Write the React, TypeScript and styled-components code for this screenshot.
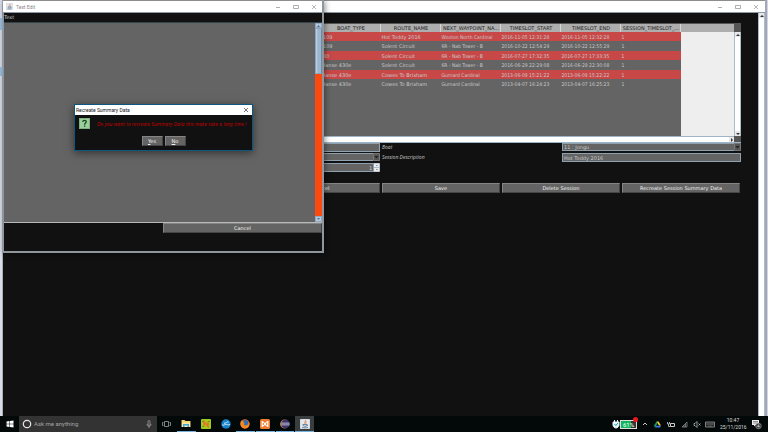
import React from "react";
import styled, { createGlobalStyle, css } from "styled-components";

const ui = `Roboto, "Noto Sans", sans-serif`;
const swing = `"DejaVu Sans", "Noto Sans", sans-serif`;
const slanted = `"Open Sans", "Noto Sans", sans-serif`;

const Global = createGlobalStyle`
  *, *::before, *::after { box-sizing: border-box; }
  html, body { margin: 0; background: #111; }
  body { font: 5px/8px ${swing}; color: #c8c8c8; }
  button, input, select { font: inherit; color: inherit; margin: 0; border-radius: 0; }
  button { padding: 0; border: 0; background: none; }
`;

const Desktop = styled.div`
  position: relative;
  min-height: 100vh;
  display: flex;
  flex-direction: column;
  overflow: hidden;
  padding: 0 1px 0 3px;
  background: linear-gradient(90deg, #d9dde9 2px, #a9adb8 2px 3px, #d3d5e4 3px);
`;

const DeskMark = styled.i<{ $top: number; $height: number }>`
  position: absolute;
  left: 0;
  width: 3px;
  top: ${(p) => p.$top}px;
  height: ${(p) => p.$height}px;
  background: #9dbfdd;
`;

const MainWindow = styled.section`
  flex: 1;
  display: flex;
  flex-direction: column;
  border-right: 2px solid #a3a7b6;
  background: #111;
`;

const TitleBar = styled.header`
  height: 13px;
  display: flex;
  align-items: center;
  gap: 3px;
  padding: 0 6px 0 3px;
  border-top: 1px solid #8d8d8d;
  border-bottom: 1px solid #8c99a6;
  background: #fff;
  color: #888;
  font-family: ${ui};
`;

const Grow = styled.span`
  flex: 1;
`;

const Controls = styled.div`
  display: flex;
  gap: 12px;
  button { width: 6px; height: 8px; display: flex; align-items: center; justify-content: center; }
`;

const WindowControls = () => (
  <Controls>
    <button aria-label="Minimize">
      <svg width="6" height="6" viewBox="0 0 6 6"><path d="M1 3.500h4" stroke="#999" strokeWidth=".8" /></svg>
    </button>
    <button aria-label="Maximize">
      <svg width="6" height="6" viewBox="0 0 6 6"><path d="M.5 1.500h5v3h-5z" fill="none" stroke="#999" strokeWidth=".8" /></svg>
    </button>
    <button aria-label="Close">
      <svg width="6" height="6" viewBox="0 0 6 6"><path d="M1 1l4 4M5 1L1 5" stroke="#999" strokeWidth=".7" /></svg>
    </button>
  </Controls>
);

const MainBody = styled.div`
  flex: 1;
  display: flex;
`;

const MainContent = styled.main`
  flex: 1;
  min-width: 0;
  padding: 10px 17px 0 18px;
`;

const Track = styled.div`
  width: 7px;
  display: flex;
  flex-direction: column;
  justify-content: space-between;
  border: solid #a9bccb;
  border-width: 0 1px 0 1px;
  background: #fff;
`;

const ArrowButton = styled.button`
  width: 5px;
  height: 5px;
  display: flex;
  align-items: center;
  justify-content: center;
  background: #e8e8e8;
`;

const Arrow = ({ turn, label }: { turn: number; label: string }) => (
  <ArrowButton aria-label={label}>
    <svg width="4" height="4" viewBox="0 0 4 4"><path d="M2 1L4 3H0z" fill="#333" transform={`rotate(${turn} 2 2)`} /></svg>
  </ArrowButton>
);

const TableFrame = styled.div`
  display: grid;
  grid-template-columns: minmax(0, 1fr) 7px;
  grid-template-rows: 112px 7px;
  border-top: 1px solid #555;
`;

const Viewport = styled.div`
  background: linear-gradient(#aeaeae 0 8px, #eee 8px);
  display: grid;
  grid-template-columns: minmax(0, 1fr) 53px;
`;

const TableArea = styled.div`
  background: #646464;
`;

const Sessions = styled.table`
  width: 100%;
  table-layout: fixed;
  border-collapse: collapse;
  white-space: nowrap;
  th, td { width: 60px; padding: 0 0 0 1px; line-height: 8px; }
  th:first-child, td:first-child { width: auto; }
  th {
    height: 8px;
    font-weight: 400;
    color: #222;
    background: #aeaeae;
    border-right: 1px solid #d5d5d5;
  }
  tbody tr { color: #c8c8c8; }
  tbody tr:nth-child(odd) { height: 9px; background: #c84848; }
  tbody tr:nth-child(even) { height: 10px; }
`;

const Cell = styled.td<{ $condensed: boolean }>`
  font-family: ${(p) => (p.$condensed ? `"DejaVu Sans Condensed", ` : "")}${swing};
`;

const SideBar = styled.div`
  display: grid;
  grid-template-rows: 8px 1fr;
  background: #555;
`;

const HorizontalTrack = styled.div`
  display: flex;
  justify-content: flex-end;
  border: solid #9fb3c6;
  border-width: 1px 0;
  background: #fff;
`;

const Corner = styled.div`
  background: #555;
  border-bottom: 1px solid #9fb3c6;
`;

const Form = styled.form`
  display: grid;
  grid-template-columns: repeat(4, minmax(0, 1fr));
  grid-auto-rows: 9px;
  row-gap: 1px;
  label { padding-left: 1px; line-height: 8px; font-family: ${slanted}; font-style: italic; }
`;

const field = css`
  width: 100%;
  min-width: 0;
  height: 9px;
  padding: 0 1px;
  border: 1px solid #8fa0ae;
  background: #646464;
  color: #c8c8c8;
  line-height: 7px;
  outline: 0;
`;

const Input = styled.input<{ $end?: boolean }>`
  ${field}
  text-align: ${(p) => (p.$end ? "right" : "left")};
`;

const Inset = styled.div<{ $last?: boolean }>`
  display: flex;
  margin: ${(p) => (p.$last ? "0 0 0 1px" : "0 1px 0 0")};
`;

const SelectBox = styled.div`
  position: relative;
  flex: 1;
  select { ${field} appearance: none; display: block; height: 8px; padding: 0 1px; line-height: 6px; }
  svg { position: absolute; right: 0; top: 0; pointer-events: none; }
`;

const Drop = () => (
  <svg width="7" height="8" viewBox="0 0 7 8"><path d="M0 0h7v8H0z" fill="#555" /><path d="M.5 .5h6v7h-6z" fill="none" stroke="#777" /><path d="M1.500 3h4l-2 2.500z" fill="#222" /></svg>
);

const Actions = styled.div`
  display: grid;
  grid-template-columns: repeat(6, minmax(0, 1fr));
  margin-top: 11px;
  button { margin: 0 1px; }
  button:first-child { grid-column: 3; }
`;

const SwingButton = styled.button`
  height: 10px;
  border: 1px solid;
  border-color: #858585 #454545 #454545 #858585;
  background: #646464;
  color: #f0f0f0;
  line-height: 8px;
`;

const EditWindow = styled.section`
  position: absolute;
  left: 3px;
  top: 0;
  width: 321px;
  display: flex;
  flex-direction: column;
  border: 1px solid #8f979c;
  border-width: 0 2px 2px 1px;
  background: #111;
  box-shadow: 1px 1px 6px rgba(0, 0, 0, 0.45);
  ${TitleBar} { margin-left: -1px; padding-right: 5px; }
`;

const MenuBar = styled.nav`
  height: 10px;
  border-bottom: 1px solid #34434c;
  button { display: block; line-height: 9px; }
`;

const EditArea = styled.div`
  height: 200px;
  display: flex;
  border-bottom: 1px solid #b5b9bb;
  background: #646464;
`;

const OrangeTrack = styled.div`
  width: 7px;
  display: grid;
  grid-template-rows: 5px 46px 1fr 6px;
  background: #fa4a10;
  button { width: 7px; height: 100%; display: grid; place-items: center; background: #b4c8dc; border: 1px solid #8fa7c0; }
`;

const Thumb = styled.div`
  border: 1px solid #8ba4c0;
  border-right-color: #7089a8;
  background: linear-gradient(90deg, #c4d4e4, #9db5cf 40%);
`;

const EditFooter = styled.footer`
  display: grid;
  grid-template-columns: 1fr 1fr;
  padding-bottom: 18px;
  button { grid-column: 2; }
`;

const Dialog = styled.section`
  position: absolute;
  left: 74px;
  top: 104px;
  width: 179px;
  border: 1px solid #0d5680;
  background: #111;
  box-shadow: 0 2px 8px rgba(0, 0, 0, 0.5);
`;

const DialogTitle = styled.header`
  height: 10px;
  display: flex;
  align-items: center;
  justify-content: space-between;
  padding: 0 3px 0 1px;
  background: #fff;
  color: #222;
  font-family: ${ui};
  button { display: flex; }
`;

const Message = styled.div`
  display: flex;
  align-items: center;
  gap: 7px;
  padding: 3px 0 0 4px;
  color: #c80000;
  font-family: ${slanted};
  font-style: italic;
  white-space: nowrap;
  svg { flex: none; }
`;

const Answers = styled.div`
  display: flex;
  justify-content: center;
  gap: 2px;
  padding: 7px 0 4px;
  button { width: 21px; }
`;

const Taskbar = styled.footer`
  position: relative;
  height: 16px;
  margin: 0 -1px 0 -3px;
  display: flex;
  align-items: stretch;
  background: #030809;
  font-family: ${ui};
`;

const Start = styled.button`
  width: 19px;
  display: grid;
  place-items: center;
`;

const Search = styled.label`
  width: 138px;
  display: flex;
  align-items: center;
  gap: 2px;
  padding: 0 5px 0 3px;
  background: #333;
  input { flex: 1; min-width: 0; border: 0; padding: 0; background: none; outline: 0; font-size: 6px; line-height: 10px; }
  input::placeholder { color: #a5a5a5; opacity: 1; }
`;

const Apps = styled.div`
  width: 157px;
  display: flex;
  gap: 1px;
`;

const TaskButton = styled.button<{ $open?: boolean; $active?: boolean }>`
  flex: 1;
  display: grid;
  place-items: center;
  border-bottom: 1px solid ${(p) => (p.$open ? "#76b2dc" : "transparent")};
  background: ${(p) => (p.$active ? "#3a3d3e" : "none")};
`;

const Tray = styled.div`
  display: flex;
  align-items: center;
  padding-right: 1px;
  svg { display: block; }
`;

const TrayIcons = styled.div`
  width: 79px;
  display: grid;
  grid-template-columns: repeat(6, 1fr);
  align-items: center;
  justify-items: center;
  margin: 0 3px 0 1px;
`;

const Clock = styled.time`
  width: 26px;
  margin-right: 5px;
  text-align: center;
  color: #ddd;
  line-height: 7px;
  white-space: nowrap;
`;

const BatteryBox = styled.span`
  position: relative;
  width: 17px;
  height: 9px;
  border: 1px solid #ddd;
  background: linear-gradient(90deg, #10b45c 65%, #333 65%);
  color: #fff;
  font-size: 6px;
  line-height: 7px;
  text-align: center;
  &::after { content: ""; position: absolute; right: -2px; top: -4px; width: 5px; height: 5px; border-radius: 50%; background: #f0141e; }
`;

const JavaIcon = ({ size }: { size: number }) => (
  <svg width={size} height={size} viewBox="0 0 10 10">
    <rect width="10" height="10" rx="1" fill="#e4e8ec" stroke="#b4bcc4" strokeWidth=".5" />
    <path d="M5.300 1.200c1 1.300-1.500 1.900-.4 3.500M6.600 2.800c-1.200.7-1.200 1.200-.8 2" fill="none" stroke="#dc6a30" strokeWidth=".8" />
    <path d="M2.800 5.500h4v1.200c0 .8-3.200.8-3.600 0zM6.800 5.700c1.200-.2 1 .9-.1 1.100M2 8.300c1.500.7 4.500.7 6 0" fill="none" stroke="#4a7192" strokeWidth=".8" />
  </svg>
);

const sessions = [
  ["J109", "Hot Toddy 2016", "Wooton North Cardinal", "2016-11-05 12:31:28", "2016-11-05 12:32:28", "1"],
  ["J109", "Solent Circuit", "6R - Nab Tower - B", "2016-10-22 12:54:29", "2016-10-22 12:55:29", "1"],
  ["J80", "Solent Circuit", "6R - Nab Tower - B", "2016-07-27 17:32:35", "2016-07-27 17:33:35", "1"],
  ["Hanse 430e", "Solent Circuit", "6R - Nab Tower - B", "2016-06-29 22:29:08", "2016-06-29 22:30:08", "1"],
  ["Hanse 430e", "Cowes To Brixham", "Gurnard Cardinal", "2013-06-09 15:21:22", "2013-06-09 15:22:22", "1"],
  ["Hanse 430e", "Cowes To Brixham", "Gurnard Cardinal", "2013-04-07 16:24:23", "2013-04-07 16:25:23", "1"],
];
const columns = ["BOAT_TYPE", "ROUTE_NAME", "NEXT_WAYPOINT_NA...", "TIMESLOT_START", "TIMESLOT_END", "SESSION_TIMESLOT_..."];

export default function App() {
  return (
    <>
      <Global />
      <Desktop>
        <DeskMark $top={18} $height={12} />
        <DeskMark $top={67} $height={9} />
        <MainWindow>
          <TitleBar><Grow /><WindowControls /></TitleBar>
          <MainBody>
            <MainContent>
              <TableFrame>
                <Viewport>
                  <TableArea>
                    <Sessions>
                      <thead><tr><th />{columns.map((c) => <th key={c}>{c}</th>)}</tr></thead>
                      <tbody>
                        {sessions.map((s) => (
                          <tr key={s[3]}>
                            <td />
                            {s.map((v, i) => <Cell key={i} $condensed={i > 1}>{v}</Cell>)}
                          </tr>
                        ))}
                      </tbody>
                    </Sessions>
                  </TableArea>
                </Viewport>
                <SideBar>
                  <span />
                  <Track><Arrow turn={0} label="Scroll up" /><Arrow turn={180} label="Scroll down" /></Track>
                </SideBar>
                <HorizontalTrack><Arrow turn={90} label="Scroll right" /></HorizontalTrack>
                <Corner />
              </TableFrame>
              <Form>
                <span />
                <Inset><Input aria-label="Session" /></Inset>
                <label htmlFor="boat">Boat</label>
                <Inset $last>
                  <SelectBox><select id="boat"><option>11 : Jongu</option></select><Drop /></SelectBox>
                </Inset>
                <span />
                <Inset><SelectBox><select aria-label="Route"><option></option></select><Drop /></SelectBox></Inset>
                <label htmlFor="description">Session Description</label>
                <Inset $last><Input id="description" defaultValue="Hot Toddy 2016" /></Inset>
                <span />
                <Inset>
                  <Input $end aria-label="Count" defaultValue="1" />
                  <svg width="6" height="9" viewBox="0 0 6 9"><path d="M0 0h6v9H0z" fill="#e8edf2" /><path d="M0 4.500h6" stroke="#a9bccb" /><path d="M2 3h2L3 2zM2 6h2L3 7z" fill="#555" /></svg>
                </Inset>
              </Form>
              <Actions>
                <SwingButton>Cancel</SwingButton>
                <SwingButton>Save</SwingButton>
                <SwingButton>Delete Session</SwingButton>
                <SwingButton>Recreate Session Summary Data</SwingButton>
              </Actions>
            </MainContent>
            <Track><Arrow turn={0} label="Scroll page up" /></Track>
          </MainBody>
        </MainWindow>

        <EditWindow>
          <TitleBar><JavaIcon size={7} />Text Edit<Grow /><WindowControls /></TitleBar>
          <MenuBar><button>Text</button></MenuBar>
          <EditArea>
            <Grow />
            <OrangeTrack>
              <button aria-label="Scroll text up"><svg width="3" height="2" viewBox="0 0 3 2"><path d="M0 2h3L1.500 0z" fill="#5d7186" /></svg></button>
              <Thumb />
              <span />
              <button aria-label="Scroll text down"><svg width="3" height="2" viewBox="0 0 3 2"><path d="M0 0h3L1.500 2z" fill="#5d7186" /></svg></button>
            </OrangeTrack>
          </EditArea>
          <EditFooter><SwingButton>Cancel</SwingButton></EditFooter>
        </EditWindow>

        <Dialog role="dialog" aria-label="Recreate Summary Data">
          <DialogTitle>
            Recreate Summary Data
            <button aria-label="Close dialog"><svg width="6" height="6" viewBox="0 0 6 6"><path d="M1 1l4 4M5 1L1 5" stroke="#333" strokeWidth=".7" /></svg></button>
          </DialogTitle>
          <Message>
            <svg width="11" height="11" viewBox="0 0 11 11">
              <rect x=".5" y=".5" width="10" height="10" fill="#9ccf9c" stroke="#7fb07f" />
              <path d="M3.800 4c0-2.300 3.600-2.200 3.500-.2C7.200 5 5.600 5 5.600 6.700M5.600 7.600v1.200" fill="none" stroke="#17451c" strokeWidth="1.300" />
            </svg>
            Do you want to recreate Summary Data this make take a long time !
          </Message>
          <Answers>
            <SwingButton><u>Y</u>es</SwingButton>
            <SwingButton><u>N</u>o</SwingButton>
          </Answers>
        </Dialog>

        <Taskbar>
          <Start aria-label="Start">
            <svg width="8" height="8" viewBox="0 0 8 8"><path d="M.5 1.400L3.500 1v2.700h-3zM4 .9L7.500.4v3.300H4zM.5 4.200h3V7l-3-.4zM4 4.200h3.500v3.300L4 7z" fill="#fff" /></svg>
          </Start>
          <Search>
            <svg width="10" height="10" viewBox="0 0 10 10"><circle cx="5" cy="5" r="3.700" fill="none" stroke="#e8e8e8" strokeWidth="1.200" /></svg>
            <input aria-label="Search" placeholder="Ask me anything" />
            <svg width="6" height="9" viewBox="0 0 6 9"><path d="M2 1.500a1 1 0 0 1 2 0v3a1 1 0 0 1-2 0zM1 4c0 3 4 3 4 0M3 6.200V8" fill="none" stroke="#aaa" strokeWidth=".7" /></svg>
          </Search>
          <Apps>
            <TaskButton aria-label="Task view">
              <svg width="9" height="8" viewBox="0 0 9 8"><path d="M2.500 1.500h4v5h-4zM1.500 2.500H.5v3h1M7.500 2.500h1v3h-1" fill="none" stroke="#b5b5b5" strokeWidth=".7" /></svg>
            </TaskButton>
            <TaskButton $open aria-label="File Explorer">
              <svg width="10" height="9" viewBox="0 0 10 9"><path d="M.5 1h3l1 1h5v6h-9z" fill="#f6d46a" /><path d="M1 3.500h8V8H1z" fill="#fbe9a8" /><path d="M2 8V5h6v3H6.500V6.500h-3V8z" fill="#3fa6dc" /></svg>
            </TaskButton>
            <TaskButton aria-label="Notes">
              <svg width="10" height="10" viewBox="0 0 10 10"><rect width="10" height="10" rx="1" fill="#9ccc1c" /><path d="M1 2.500h2M7 2.500h2M1 7.500h2" stroke="#5c9a14" /><path d="M3 7.500v-5l4 5v-5" fill="none" stroke="#e8702a" strokeWidth="1.400" /></svg>
            </TaskButton>
            <TaskButton aria-label="Sea charts">
              <svg width="10" height="10" viewBox="0 0 10 10"><circle cx="5" cy="5" r="4.700" fill="#1583cc" /><path d="M1.200 5.800C3 7 4 5 5.500 5.400S8 6.500 9 5M3 4.200C5 4.800 5.500 2.500 7.600 3" fill="none" stroke="#d5eefc" /></svg>
            </TaskButton>
            <TaskButton $open aria-label="Firefox">
              <svg width="10" height="10" viewBox="0 0 10 10"><circle cx="5" cy="5" r="4.700" fill="#e66a1c" /><circle cx="5.200" cy="4" r="3" fill="#2c6fb5" /><path d="M.6 3C1 1.500 2 1 2.600 1.200 2.500 3 4.500 3 4.500 4.200 3.500 5 4 6.500 6 6.300s3-1.800 2.800-3.400c1.500 3-.4 6.500-3.800 6.500S-.2 6 .6 3z" fill="#f08a24" /></svg>
            </TaskButton>
            <TaskButton $open aria-label="XAMPP">
              <svg width="10" height="10" viewBox="0 0 10 10"><rect width="10" height="10" rx="1.500" fill="#f07b2c" /><path d="M2.200 2.500c2 0 3.600 5 5.600 5v-5c-2 0-3.600 5-5.600 5z" fill="none" stroke="#fff" strokeWidth="1.200" /></svg>
            </TaskButton>
            <TaskButton $open aria-label="Eclipse">
              <svg width="10" height="10" viewBox="0 0 10 10"><circle cx="4.500" cy="5" r="4.400" fill="#e08a3c" /><circle cx="5.400" cy="5" r="4.400" fill="#3b3568" /><path d="M1.200 4h8.300M1 5h8.800M1.200 6h8.300" stroke="#d8d4ea" strokeWidth=".6" /></svg>
            </TaskButton>
            <TaskButton $open $active aria-label="Java"><JavaIcon size={10} /></TaskButton>
          </Apps>
          <Grow />
          <Tray>
            <svg width="8" height="10" viewBox="0 0 8 10"><path d="M1 3h6v3c0 2-2 3-3 3S1 8 1 6zM2.500 3V1M5.500 3V1" fill="#e8f4f8" stroke="#e8f4f8" /><path d="M2.500 5l1.300 1.500L6 4" fill="none" stroke="#149fbd" /></svg>
            <BatteryBox>61%</BatteryBox>
            <TrayIcons>
              <svg width="6" height="8" viewBox="0 0 6 8"><path d="M1 5l2-2 2 2" fill="none" stroke="#ddd" strokeWidth=".9" /></svg>
              <svg width="7" height="7" viewBox="0 0 7 7"><path d="M2.500.5h2l2.500 4H5z" fill="#fc3" /><path d="M2.500.5L0 4.700l1 1.800 2.500-4.200z" fill="#16a464" /><path d="M2 4.700h5L6 6.500H1z" fill="#3777e3" /></svg>
              <svg width="8" height="7" viewBox="0 0 8 7"><path d="M3.500 2.500h4v3h-4z" fill="none" stroke="#ccc" /><path d="M.5 1v2h2V1M1.500 3v2.500h2" fill="none" stroke="#ccc" strokeWidth=".8" /></svg>
              <svg width="7" height="7" viewBox="0 0 7 7"><path d="M1 6L6 1v5zM3 4v2M4.500 3v3" fill="none" stroke="#999" strokeWidth=".7" /></svg>
              <svg width="8" height="7" viewBox="0 0 8 7"><path d="M1 2.500h1l2-2v6l-2-2H1zM5.500 2.500l2 2M7.500 2.500l-2 2" fill="none" stroke="#ccc" strokeWidth=".7" /></svg>
              <svg width="10" height="7" viewBox="0 0 10 7"><path d="M.5 1h9v5h-9z" fill="#222" stroke="#aaa" strokeWidth=".7" /><path d="M1.500 2.500h7M1.500 3.500h7M3 5h4" stroke="#aaa" strokeWidth=".5" strokeDasharray=".7 .4" /></svg>
            </TrayIcons>
            <Clock>10:47<br />25/11/2016</Clock>
            <svg width="16" height="12" viewBox="0 0 16 12"><path d="M1 2h7v5H4.500L3 8.500V7H1z" fill="#eee" /><path d="M2 3.500h5M2 5h5" stroke="#555" strokeWidth=".6" /><circle cx="7.500" cy="8" r="2.800" fill="#333" stroke="#aaa" strokeWidth=".6" /><path d="M7.800 9.500v-3L6.300 8.500h2.500" fill="none" stroke="#fff" strokeWidth=".5" /></svg>
          </Tray>
        </Taskbar>
      </Desktop>
    </>
  );
}
